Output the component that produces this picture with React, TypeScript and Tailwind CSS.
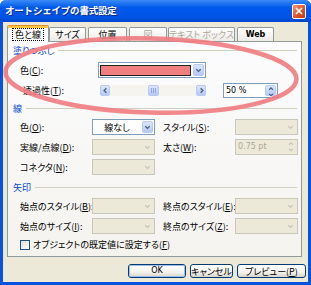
import React from 'react';

const Chevron: React.FC<{ dir?: 'down' | 'up' | 'left' | 'right'; color?: string; size?: number }> = ({
  dir = 'down',
  color = '#4D6185',
  size = 8,
}) => {
  const paths = {
    down: 'M1.5 2.5L4 5l2.5-2.5',
    up: 'M1.5 5L4 2.5 6.5 5',
    left: 'M5 1.5L2.5 4 5 6.5',
    right: 'M3 1.5L5.5 4 3 6.5',
  };
  return (
    <svg width={size} height={size} viewBox="0 0 8 8">
      <path d={paths[dir]} fill="none" stroke={color} strokeWidth="1.6" />
    </svg>
  );
};

const blueBtn = 'border border-[#B6CAF4] bg-[linear-gradient(to_bottom,#DCE6FD,#B4C9F6)]';

const Combo: React.FC<{ className?: string; disabled?: boolean; children?: React.ReactNode }> = ({
  className = '',
  disabled,
  children,
}) => (
  <div
    className={`flex h-[16px] border ${
      disabled ? 'border-[#C9C7BA] bg-[#ECE9D8]' : 'border-[#7F9DB9] bg-white'
    } ${className}`}
  >
    <div className="flex min-w-0 flex-1 items-center justify-center">{children}</div>
    <div
      className={`m-px flex w-[11px] items-center justify-center rounded-[2px] ${
        disabled ? '' : 'border border-[#B6CAF4] bg-[linear-gradient(to_bottom,#DCE6FD,#B4C9F6)]'
      }`}
    >
      <Chevron color={disabled ? '#C9C7BA' : '#4D6185'} size={7} />
    </div>
  </div>
);

const Label: React.FC<{ className?: string; children: React.ReactNode }> = ({ className = '', children }) => (
  <span className={`whitespace-nowrap text-[9px] leading-none text-black ${className}`}>{children}</span>
);

const Section: React.FC<{ title: string; className?: string }> = ({ title, className = '' }) => (
  <div className={`flex h-[12px] items-center pl-[5px] pr-[4px] ${className}`}>
    <span className="text-[9px] leading-none text-[#0046D5]">{title}</span>
    <div className="ml-[4px] h-px flex-1 bg-[#D0D0BF]" />
  </div>
);

const ScrollBtn: React.FC<{ dir: 'left' | 'right' }> = ({ dir }) => (
  <div className={`flex h-[11px] w-[10px] items-center justify-center rounded-[2px] ${blueBtn}`}>
    <Chevron dir={dir} size={7} />
  </div>
);

const Tab: React.FC<{ label: string; className: string; disabled?: boolean; latin?: boolean }> = ({
  label,
  className,
  disabled,
  latin,
}) => (
  <div
    className={`flex h-[14px] items-center justify-center whitespace-nowrap rounded-t-[2px] border border-b-0 border-[#919B9C] bg-[linear-gradient(to_bottom,#FFFFFF,#ECEBE6)] leading-none ${
      disabled ? 'text-[#ACA899]' : 'text-black'
    } ${latin ? "font-['DejaVu_Sans',sans-serif] text-[8px]" : 'text-[9px]'} ${className}`}
  >
    {label}
  </div>
);

const Button: React.FC<{ className: string; primary?: boolean; children: React.ReactNode }> = ({
  className,
  primary,
  children,
}) => (
  <div
    className={`h-[14px] rounded-[3px] border border-[#003C74] bg-[linear-gradient(to_bottom,#FFFFFF,#F3F2EE_60%,#D8D3C8)] ${className}`}
  >
    <div
      className={`flex h-full items-center justify-center whitespace-nowrap rounded-[2px] text-[9px] leading-none text-black ${
        primary ? 'border border-[#9DBCF0]' : ''
      }`}
    >
      {children}
    </div>
  </div>
);

const App: React.FC = () => {
  return (
    <div className="h-[285px] w-[311px]">
      <div className="flex h-[285px] w-[311px] flex-col rounded-t-[6px] bg-[#0852DD] font-['Noto_Sans_CJK_JP','Noto_Sans_CJK_SC',sans-serif] [font-feature-settings:'palt']">
        {/* title bar */}
        <div className="flex h-[22px] items-center rounded-t-[6px] bg-[linear-gradient(to_bottom,#3B8CF7,#0058EA_35%,#0053E4_80%,#0047CC)] pl-[5px] pr-[5px]">
          <span className="text-[9.5px] font-bold leading-none tracking-[-0.2px] text-white [font-feature-settings:normal] [text-shadow:1px_1px_0_#0A2A8A]">
            オートシェイプの書式設定
          </span>
          <div className="ml-auto flex h-[15px] w-[14px] items-center justify-center rounded-[2px] border border-white bg-[linear-gradient(135deg,#F09A78,#E0522A_55%,#C2381A)]">
            <svg width="8" height="8" viewBox="0 0 8 8">
              <path d="M1 1l6 6M7 1L1 7" stroke="white" strokeWidth="1.7" />
            </svg>
          </div>
        </div>

        {/* body */}
        <div className="relative mx-[3px] mb-[3px] flex flex-1 flex-col bg-[#ECE9D8] pl-[4px] pt-[3px]">
          {/* tabs */}
          <div className="flex h-[16px] items-end">
            <div className="relative z-10 -mb-px flex h-[17px] w-[42px] items-center justify-center rounded-t-[2px] border border-b-0 border-[#919B9C] border-t-[#E68B2C] bg-[#FCFCFE] text-[9px] leading-none text-black shadow-[inset_0_2px_0_#FFC83C]">
              <span className="mt-[1px] border border-dotted border-black px-[2px] py-px">色と線</span>
            </div>
            <Tab label="サイズ" className="w-[37px]" />
            <Tab label="位置" className="ml-[2px] w-[39px]" />
            <Tab label="図" className="ml-[2px] w-[38px]" disabled />
            <Tab label="テキスト ボックス" className="ml-[1px] w-[67px]" disabled />
            <Tab label="Web" className="ml-[2px] w-[37px] font-bold" latin />
          </div>

          {/* panel */}
          <div className="flex h-[216px] w-[295px] flex-col border border-[#919B9C] bg-[linear-gradient(to_bottom,#FCFCFE,#F4F3EE)]">
            <Section title="塗りつぶし" className="mt-[2px]" />

            <div className="mt-[6px] flex h-[16px] items-center pl-[12px]">
              <Label className="w-[78px]">
                色(<u>C</u>):
              </Label>
              <Combo className="w-[108px]">
                <div className="mx-[1px] h-[11px] w-full border border-[#222] bg-[#F07F7F]" />
              </Combo>
            </div>

            <div className="mt-[4px] flex h-[16px] items-center pl-[15px]">
              <Label className="w-[77px]">
                透過性(<u>T</u>):
              </Label>
              <div className="flex h-[11px] w-[106px] items-center bg-[#F5F4EF]">
                <ScrollBtn dir="left" />
                <div className="flex flex-1 justify-center">
                  <div className={`flex h-[11px] w-[11px] items-center justify-center gap-px rounded-[2px] ${blueBtn}`}>
                    <div className="h-[5px] w-px bg-[#8EA7DD]" />
                    <div className="h-[5px] w-px bg-[#8EA7DD]" />
                    <div className="h-[5px] w-px bg-[#8EA7DD]" />
                  </div>
                </div>
                <ScrollBtn dir="right" />
              </div>
              <div className="ml-[17px] flex h-[15px] w-[55px] border border-[#7F9DB9] bg-white">
                <span className="flex-1 pl-[2px] font-['DejaVu_Sans',sans-serif] text-[8px] leading-[13px] text-black">
                  50 %
                </span>
                <div className={`m-px flex w-[11px] flex-col rounded-[2px] ${blueBtn}`}>
                  <div className="flex flex-1 items-center justify-center">
                    <Chevron dir="up" size={6} />
                  </div>
                  <div className="flex flex-1 items-center justify-center">
                    <Chevron dir="down" size={6} />
                  </div>
                </div>
              </div>
            </div>

            <Section title="線" className="mt-[4px]" />

            <div className="mt-[5px] flex h-[16px] items-center pl-[12px]">
              <Label className="w-[72px]">
                色(<u>O</u>):
              </Label>
              <Combo className="w-[63px]">
                <Label>線なし</Label>
              </Combo>
              <Label className="ml-[8px] w-[72px]">
                スタイル(<u>S</u>):
              </Label>
              <Combo className="w-[63px]" disabled />
            </div>

            <div className="mt-[4px] flex h-[16px] items-center pl-[12px]">
              <Label className="w-[72px]">
                実線/点線(<u>D</u>):
              </Label>
              <Combo className="w-[63px]" disabled />
              <Label className="ml-[8px] w-[72px]">
                太さ(<u>W</u>):
              </Label>
              <div className="flex h-[16px] w-[63px] border border-[#C9C7BA] bg-[#ECE9D8]">
                <span className="flex-1 pl-[2px] font-['DejaVu_Sans',sans-serif] text-[8px] leading-[14px] text-[#ACA899]">
                  0.75 pt
                </span>
                <div className="m-px flex w-[11px] flex-col">
                  <div className="flex flex-1 items-center justify-center">
                    <Chevron dir="up" size={6} color="#C9C7BA" />
                  </div>
                  <div className="flex flex-1 items-center justify-center">
                    <Chevron dir="down" size={6} color="#C9C7BA" />
                  </div>
                </div>
              </div>
            </div>

            <div className="mt-[4px] flex h-[16px] items-center pl-[12px]">
              <Label className="w-[72px]">
                コネクタ(<u>N</u>):
              </Label>
              <Combo className="w-[63px]" disabled />
            </div>

            <Section title="矢印" className="mt-[6px]" />

            <div className="mt-[5px] flex h-[16px] items-center pl-[12px]">
              <Label className="w-[72px]">
                始点のスタイル(<u>B</u>):
              </Label>
              <Combo className="w-[63px]" disabled />
              <Label className="ml-[8px] w-[72px]">
                終点のスタイル(<u>E</u>):
              </Label>
              <Combo className="w-[63px]" disabled />
            </div>

            <div className="mt-[4px] flex h-[16px] items-center pl-[12px]">
              <Label className="w-[72px]">
                始点のサイズ(<u>I</u>):
              </Label>
              <Combo className="w-[63px]" disabled />
              <Label className="ml-[8px] w-[72px]">
                終点のサイズ(<u>Z</u>):
              </Label>
              <Combo className="w-[63px]" disabled />
            </div>

            <div className="mt-[4px] flex h-[13px] items-center pl-[12px]">
              <div className="h-[10px] w-[10px] border border-[#1C5180] bg-[linear-gradient(135deg,#DCDBD5,#FFFFFF)]" />
              <Label className="ml-[3px]">
                オブジェクトの既定値に設定する(<u>F</u>)
              </Label>
            </div>
          </div>

          {/* buttons */}
          <div className="mt-[7px] flex justify-end pr-[2px]">
            <Button className="w-[58px]" primary>
              <span className="font-['DejaVu_Sans',sans-serif] text-[8px]">OK</span>
            </Button>
            <Button className="ml-[4px] w-[43px]">キャンセル</Button>
            <Button className="ml-[4px] w-[69px]">
              プレビュー(<u>P</u>)
            </Button>
          </div>

          {/* annotation ellipse */}
          <svg className="pointer-events-none absolute left-[-3px] top-[-22px]" width="311" height="285" viewBox="0 0 311 285">
            <ellipse
              cx="151"
              cy="75.5"
              rx="145.5"
              ry="37"
              fill="none"
              stroke="#EF7B80"
              strokeWidth="4.5"
              opacity="0.9"
              transform="rotate(1.5 151 75.5)"
            />
          </svg>
        </div>
      </div>
    </div>
  );
};

export default App;
